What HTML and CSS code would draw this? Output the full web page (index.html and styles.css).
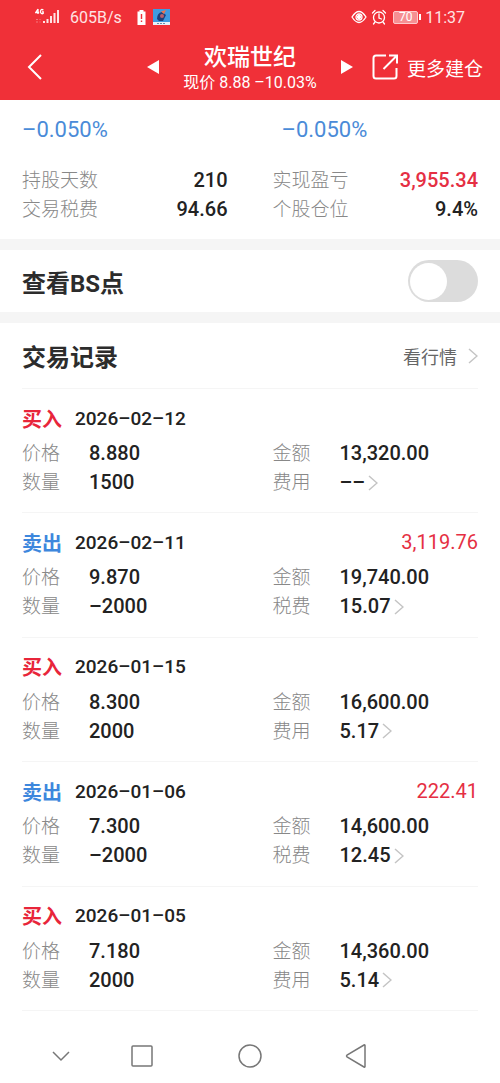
FILE: index.html
```html
<!DOCTYPE html>
<html lang="zh-CN">
<head>
<meta charset="utf-8">
<meta name="viewport" content="width=device-width, initial-scale=1">
<title>欢瑞世纪</title>
<link rel="stylesheet" href="styles.css">
</head>
<body>
<div class="page">
  <header class="header">
    <div class="status">
      <div class="status-side">
        <svg class="signal" width="26" height="18" viewBox="0 0 26 18" aria-hidden="true">
          <g fill="none" stroke="#fff" stroke-width="1.3"><path d="M3 1v5M3 1L.8 4.5h3.4M8.300 2.200C7 .8 5.500 1.500 5.500 3.500S7 6.200 8.200 5.500V3.800H7"/></g>
          <path d="M1 11h2v1H1zM4.500 11h1v1h-1zM1 13.500h2v1H1zM4.500 13.500h1v1h-1z" fill="#fff" opacity=".35"/>
          <path d="M8 13h2v2H8zM11.500 11h2v4h-2zM15 8h2v7h-2zM18.500 5h2v10h-2zM22 2h2v13h-2z" fill="#ffe3e3"/>
        </svg>
        <span class="speed">605B/s</span>
        <svg class="battery-alert" width="9" height="15" viewBox="0 0 9 15" aria-hidden="true"><path d="M2.500 0h4v1.500H8.500V15H.5V1.500h2z" fill="#fff"/><path d="M4.500 4v5M4.500 10.500v1.500" stroke="#ef3038" stroke-width="1.400"/></svg>
        <svg class="app-icon" width="17" height="16" viewBox="0 0 17 16" aria-hidden="true"><rect width="17" height="16" fill="#3f9be0"/><path d="M4 10Q4 4 9 3l4 3-3 6H6z" fill="#1c3f7c"/><circle cx="9" cy="7" r="2" fill="#b8606c"/><path d="M8 2.500l5-1.500-2 4z" fill="#f0734a"/><path d="M0 13h17v3H0z" fill="#e8f2f9"/><path d="M4 14.500h9" stroke="#6b8dab" stroke-dasharray="2 1"/></svg>
      </div>
      <div class="status-side status-right">
        <svg width="16" height="14" viewBox="0 0 16 14" fill="none" stroke="#fff" stroke-width="1.300" aria-hidden="true"><path d="M1 7q7-11 14 0-7 11-14 0z"/><circle cx="8" cy="7" r="3"/><circle cx="8" cy="7" r="1.500" fill="#fff"/></svg>
        <svg width="16" height="16" viewBox="0 0 16 16" fill="none" stroke="#fff" stroke-width="1.300" stroke-linecap="round" aria-hidden="true"><circle cx="8" cy="8.500" r="5.500"/><path d="M1.500 4L4 1.500M12 1.500L14.500 4M4 13l-1.500 2M12 13l1.500 2M8 5v4l2.500 1"/></svg>
        <span class="battery"><span class="battery-level">70</span></span>
        <span class="clock">11:37</span>
      </div>
    </div>
    <div class="titlebar">
      <button class="icon-button back" aria-label="返回"><svg width="16" height="26" viewBox="0 0 16 26" fill="none" stroke="#fff" stroke-width="2"><path d="M14 1L2 13l12 12"/></svg></button>
      <div class="stock">
        <button class="icon-button" aria-label="上一只"><svg width="12" height="14" viewBox="0 0 12 14"><path d="M0 7L12 0v14z" fill="#fff"/></svg></button>
        <div class="stock-name">
          <h1 class="name">欢瑞世纪</h1>
          <p class="quote">现价 8.88 –10.03%</p>
        </div>
        <button class="icon-button" aria-label="下一只"><svg width="12" height="14" viewBox="0 0 12 14"><path d="M12 7L0 0v14z" fill="#fff"/></svg></button>
      </div>
      <button class="icon-button more"><svg width="27" height="26" viewBox="0 0 27 26" fill="none" stroke="#fff" stroke-width="2"><path d="M14 1.500H4Q1.500 1.500 1.500 4v18Q1.500 24.500 4 24.500h18q2.500 0 2.500-2.500V14M11.500 15L25 1.500M17 1.500h8v8"/></svg><span>更多建仓</span></button>
    </div>
  </header>

  <main class="content">
    <section class="summary">
      <p class="rate">–0.050%</p>
      <p class="rate rate-right">–0.050%</p>
      <dl class="stats">
        <div class="stat"><dt>持股天数</dt><dd>210</dd></div>
        <div class="stat"><dt>交易税费</dt><dd>94.66</dd></div>
      </dl>
      <dl class="stats">
        <div class="stat"><dt>实现盈亏</dt><dd class="gain">3,955.34</dd></div>
        <div class="stat"><dt>个股仓位</dt><dd>9.4%</dd></div>
      </dl>
    </section>

    <section class="switch-row">
      <label class="heading" for="bs">查看BS点</label>
      <input class="switch" id="bs" type="checkbox" role="switch">
    </section>

    <section class="trades">
      <div class="trades-head">
        <h2 class="heading">交易记录</h2>
        <a class="market" href="#">看行情<svg class="chevron" width="10" height="16" viewBox="0 0 10 16"><path d="M1 1l8 7-8 7"/></svg></a>
      </div>
      <ol class="records">
        <li class="record">
          <div class="record-head"><strong class="side buy">买入</strong><time>2026–02–12</time></div>
          <dl class="fields">
            <div class="field"><dt>价格</dt><dd>8.880</dd></div>
            <div class="field"><dt>金额</dt><dd>13,320.00</dd></div>
            <div class="field"><dt>数量</dt><dd>1500</dd></div>
            <div class="field"><dt>费用</dt><dd><a class="fee" href="#">––<svg class="chevron" width="10" height="16" viewBox="0 0 10 16"><path d="M1 1l8 7-8 7"/></svg></a></dd></div>
          </dl>
        </li>
        <li class="record">
          <div class="record-head"><strong class="side sell">卖出</strong><time>2026–02–11</time><span class="profit gain">3,119.76</span></div>
          <dl class="fields">
            <div class="field"><dt>价格</dt><dd>9.870</dd></div>
            <div class="field"><dt>金额</dt><dd>19,740.00</dd></div>
            <div class="field"><dt>数量</dt><dd>–2000</dd></div>
            <div class="field"><dt>税费</dt><dd><a class="fee" href="#">15.07<svg class="chevron" width="10" height="16" viewBox="0 0 10 16"><path d="M1 1l8 7-8 7"/></svg></a></dd></div>
          </dl>
        </li>
        <li class="record">
          <div class="record-head"><strong class="side buy">买入</strong><time>2026–01–15</time></div>
          <dl class="fields">
            <div class="field"><dt>价格</dt><dd>8.300</dd></div>
            <div class="field"><dt>金额</dt><dd>16,600.00</dd></div>
            <div class="field"><dt>数量</dt><dd>2000</dd></div>
            <div class="field"><dt>费用</dt><dd><a class="fee" href="#">5.17<svg class="chevron" width="10" height="16" viewBox="0 0 10 16"><path d="M1 1l8 7-8 7"/></svg></a></dd></div>
          </dl>
        </li>
        <li class="record">
          <div class="record-head"><strong class="side sell">卖出</strong><time>2026–01–06</time><span class="profit gain">222.41</span></div>
          <dl class="fields">
            <div class="field"><dt>价格</dt><dd>7.300</dd></div>
            <div class="field"><dt>金额</dt><dd>14,600.00</dd></div>
            <div class="field"><dt>数量</dt><dd>–2000</dd></div>
            <div class="field"><dt>税费</dt><dd><a class="fee" href="#">12.45<svg class="chevron" width="10" height="16" viewBox="0 0 10 16"><path d="M1 1l8 7-8 7"/></svg></a></dd></div>
          </dl>
        </li>
        <li class="record">
          <div class="record-head"><strong class="side buy">买入</strong><time>2026–01–05</time></div>
          <dl class="fields">
            <div class="field"><dt>价格</dt><dd>7.180</dd></div>
            <div class="field"><dt>金额</dt><dd>14,360.00</dd></div>
            <div class="field"><dt>数量</dt><dd>2000</dd></div>
            <div class="field"><dt>费用</dt><dd><a class="fee" href="#">5.14<svg class="chevron" width="10" height="16" viewBox="0 0 10 16"><path d="M1 1l8 7-8 7"/></svg></a></dd></div>
          </dl>
        </li>
      </ol>
    </section>
  </main>

  <nav class="navbar" aria-label="系统导航">
    <button class="icon-button" aria-label="收起"><svg width="20" height="12" viewBox="0 0 20 12"><path d="M2 2l8 8 8-8"/></svg></button>
    <button class="icon-button" aria-label="最近任务"><svg width="24" height="24" viewBox="0 0 24 24"><rect x="2" y="2" width="20" height="20" rx="1"/></svg></button>
    <button class="icon-button" aria-label="主屏幕"><svg width="26" height="26" viewBox="0 0 26 26"><circle cx="13" cy="13" r="11"/></svg></button>
    <button class="icon-button" aria-label="后退"><svg width="24" height="26" viewBox="0 0 24 26"><path d="M21 2.500v21q0 1-1 .5L3 14q-1-1 0-2L20 2q1-.5 1 .5z"/></svg></button>
  </nav>
</div>
</body>
</html>
```

FILE: styles.css
```css
* {
  box-sizing: border-box;
  margin: 0;
  padding: 0;
}

body {
  font-family: Roboto, "Noto Sans CJK SC", sans-serif;
  font-size: 20px;
  color: #222;
  background: #fff;
}

a {
  color: inherit;
  text-decoration: none;
}

svg {
  display: block;
  flex: none;
}

.page {
  display: flex;
  flex-direction: column;
  min-height: 100vh;
}

.icon-button {
  display: flex;
  align-items: center;
  border: 0;
  background: none;
  color: inherit;
  font: inherit;
}

/* Header */
.header {
  height: 100px;
  background: #f03038;
  color: #fff;
}

.status {
  display: flex;
  justify-content: space-between;
  height: 34px;
  padding: 0 35px;
}

.status-side {
  display: flex;
  align-items: center;
  color: #ffe3e3;
}

.speed {
  margin-left: 9px;
  font-size: 16px;
}

.battery-alert {
  margin-left: 15px;
}

.app-icon {
  margin-left: 7px;
}

.status-right {
  gap: 4px;
}

.battery {
  display: flex;
  align-items: center;
  margin-left: 2px;
}

.battery-level {
  width: 25px;
  height: 13px;
  border: 1px solid #ffc9cb;
  border-radius: 2px;
  background: #f68f93;
  color: #fff;
  font-size: 12px;
  line-height: 11px;
  text-align: center;
}

.battery::after {
  content: "";
  width: 2px;
  height: 6px;
  margin-left: 1px;
  background: #fff;
}

.clock {
  font-size: 16px;
}

.titlebar {
  display: grid;
  grid-template-columns: 1fr auto 1fr;
  align-items: center;
  height: 66px;
  padding: 0 17px;
}

.back {
  padding-left: 10px;
}

.stock {
  display: flex;
  align-items: center;
  gap: 24px;
}

.stock-name {
  padding-top: 4px;
  text-align: center;
}

.name {
  font-size: 23px;
  font-weight: 500;
  line-height: 28px;
}

.quote {
  font-size: 16px;
  font-weight: 400;
  line-height: 22px;
}

.more {
  justify-self: end;
  gap: 8px;
  font-size: 19px;
  white-space: nowrap;
}

/* Holding summary */
.summary {
  display: grid;
  grid-template-columns: 1fr 1fr;
  column-gap: 45px;
  padding: 15px 22px;
  border-bottom: 11px solid #f5f5f5;
}

.rate {
  margin-bottom: 21px;
  font-size: 22px;
  line-height: 30px;
  color: #4a8bd8;
}

.rate-right {
  padding-left: 9px;
}

.stat {
  display: flex;
  justify-content: space-between;
  line-height: 29px;
}

dt {
  font-size: 19px;
  font-weight: 300;
  color: #888;
}

dd {
  font-weight: 500;
}

.gain {
  color: #e52f43;
}

/* Switch row */
.heading {
  font-size: 24px;
  font-weight: 700;
  color: #2c2c2c;
}

.switch-row {
  display: flex;
  align-items: center;
  justify-content: space-between;
  height: 73px;
  padding: 0 22px;
  border-bottom: 11px solid #f5f5f5;
}

.switch {
  display: flex;
  align-items: center;
  width: 70px;
  height: 42px;
  padding: 2px;
  border-radius: 21px;
  background: #dcdcdc;
  appearance: none;
}

.switch::before {
  content: "";
  width: 37px;
  height: 37px;
  border-radius: 50%;
  background: #fff;
}

.switch:checked {
  justify-content: flex-end;
  background: #f03038;
}

/* Trade records */
.content,
.trades {
  display: flex;
  flex: 1;
  flex-direction: column;
}

.trades-head {
  display: flex;
  align-items: center;
  justify-content: space-between;
  height: 65px;
  padding: 0 22px;
}

.market {
  display: flex;
  align-items: center;
  gap: 11px;
  font-size: 18px;
  color: #666;
}

.chevron {
  fill: none;
  stroke: #c4c4c4;
  stroke-width: 1.5;
}

.records {
  display: grid;
  flex: 1;
  grid-auto-rows: 1fr;
  margin: 0 22px;
  border-bottom: 1px solid #f5f5f5;
  list-style: none;
}

.record {
  padding: 14px 0 12px;
  border-top: 1px solid #f5f5f5;
}

.record-head {
  display: flex;
  align-items: center;
  gap: 13px;
  height: 30px;
  margin-bottom: 6px;
}

.record-head time {
  font-size: 19px;
  font-weight: 500;
}

.side {
  font-size: 20px;
}

.buy {
  color: #e8253a;
}

.sell {
  color: #3d87dd;
}

.profit {
  margin-left: auto;
}

.fields {
  display: grid;
  grid-template-columns: 1fr 1fr;
  column-gap: 45px;
}

.field {
  display: grid;
  grid-template-columns: 67px 1fr;
  line-height: 29px;
}

.fee {
  display: flex;
  align-items: center;
  gap: 3px;
}

/* System navigation */
.navbar {
  display: grid;
  grid-template-columns: 82fr 80fr 134fr 78fr;
  height: 72px;
  padding: 18px 21% 0 4%;
}

.navbar .icon-button {
  justify-content: center;
}

.navbar svg {
  fill: none;
  stroke: #777;
  stroke-width: 1.5;
}
```
